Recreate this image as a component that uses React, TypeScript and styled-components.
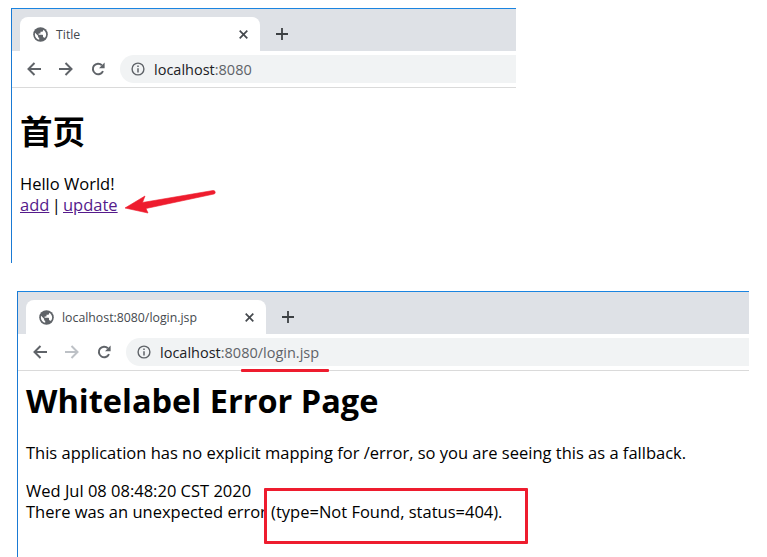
import React from "react";
import styled, { createGlobalStyle } from "styled-components";

const GlobalStyle = createGlobalStyle`
  html, body {
    margin: 0;
    padding: 0;
    background: #fff;
    overflow: hidden;
  }
  body {
    font-family: "Open Sans", "Noto Sans CJK SC", sans-serif;
    color: #000;
  }
`;

const Page = styled.div`
  width: 767px;
  height: 557px;
  position: relative;
  overflow: hidden;
  display: flex;
  flex-direction: column;
`;

const Shot = styled.section<{ $left: number; $top: number; $width: number; $height: number }>`
  position: relative;
  box-sizing: border-box;
  margin-left: ${(p) => p.$left}px;
  margin-top: ${(p) => p.$top}px;
  width: ${(p) => p.$width}px;
  height: ${(p) => p.$height}px;
  border-left: 1px solid #1a7ad4;
  border-top: 1px solid #1a84e0;
  flex: none;
`;

const TabStrip = styled.div`
  height: 42px;
  background: #dee1e6;
  display: flex;
  align-items: flex-end;
  padding-left: 8px;
`;

const Tab = styled.div`
  width: 240px;
  height: 34px;
  box-sizing: border-box;
  background: #fff;
  border-radius: 8px 8px 0 0;
  display: flex;
  align-items: center;
  padding: 0 12px 0 13px;
  font-size: 12.3px;
  color: #45494e;
  flex: none;
`;

const TabTitle = styled.span`
  margin-left: 8px;
  flex: 1;
  white-space: nowrap;
`;

const NewTab = styled.div`
  width: 44px;
  height: 34px;
  display: flex;
  align-items: center;
  justify-content: center;
  color: #3c4043;
  flex: none;
`;

const Toolbar = styled.div`
  box-sizing: border-box;
  border-bottom: 1px solid #dadada;
  height: 37px;
  background: #fff;
  display: flex;
  align-items: flex-start;
  padding: 4px 0 0 15px;
`;

const NavButtons = styled.div`
  display: flex;
  align-items: center;
  gap: 18px;
  height: 28px;
  flex: none;
`;

const Omnibox = styled.div`
  margin-left: 15px;
  flex: 1;
  height: 28px;
  background: #f1f3f4;
  border-radius: 14px 0 0 14px;
  display: flex;
  align-items: center;
  padding-left: 11px;
  font-size: 14.5px;
  color: #202124;
`;

const Host = styled.span`
  margin-left: 9px;
  white-space: nowrap;
`;

const Dim = styled.span`
  color: #5f6368;
`;

const Content = styled.div<{ $paddingLeft: number }>`
  padding-left: ${(p) => p.$paddingLeft}px;
`;

const Heading = styled.h1<{ $top: number }>`
  margin: ${(p) => p.$top}px 0 0;
  font-size: 32.5px;
  font-weight: 700;
  line-height: 44px;
  white-space: nowrap;
`;

const BodyLine = styled.div<{ $top?: number }>`
  margin-top: ${(p) => p.$top ?? 0}px;
  font-size: 16.5px;
  line-height: 21px;
  white-space: nowrap;
`;

const LinkLine = styled(BodyLine)`
  word-spacing: -2px;
`;

const Link = styled.a`
  color: #551a8b;
  text-decoration: underline;
`;

const ArrowMark = styled.svg`
  position: absolute;
  left: 113px;
  top: 181px;
`;

const UrlUnderline = styled.div`
  position: absolute;
  left: 223px;
  top: 77px;
  width: 88px;
  height: 3px;
  border-radius: 1px;
  background: #ee1c2e;
`;

const ErrorBox = styled.div`
  position: absolute;
  left: 246px;
  top: 196px;
  box-sizing: border-box;
  width: 264px;
  height: 56px;
  border: 3px solid #ee1c2e;
  border-radius: 1px;
`;

function Globe() {
  return (
    <svg width="15" height="15" viewBox="0 0 16 16">
      <circle cx="8" cy="8" r="7.8" fill="#5f6368" />
      <path
        d="M2.2 6.2 5.4 9.2v1c0 .8.6 1.3 1.2 1.3v2.2C4.2 13.3 2 11 2 8c0-.6.1-1.2.2-1.8ZM10.8 2.9c1.9.9 3.2 2.8 3.2 5.1 0 1.4-.6 2.8-1.5 3.8-.2-.5-.7-.9-1.2-.9h-.6V9c0-.4-.3-.7-.7-.7H6V7h1.3c.4 0 .7-.3.7-.7V5h1.3c.8 0 1.5-.6 1.5-1.4v-.7Z"
        fill="#fff"
      />
    </svg>
  );
}

function CloseIcon() {
  return (
    <svg width="9" height="9" viewBox="0 0 9 9">
      <path d="M.7.7 8.3 8.3M8.3.7.7 8.3" stroke="#45494e" strokeWidth="1.7" fill="none" />
    </svg>
  );
}

function PlusIcon() {
  return (
    <svg width="14" height="14" viewBox="0 0 14 14">
      <path d="M7 1v12M1 7h12" stroke="#3c4043" strokeWidth="1.8" fill="none" />
    </svg>
  );
}

function BackIcon() {
  return (
    <svg width="14" height="14" viewBox="0 0 14 14">
      <path d="M14 7H1.5M7.5 1 1.5 7l6 6" stroke="#5f6368" strokeWidth="2" fill="none" />
    </svg>
  );
}

function ForwardIcon({ off }: { off?: boolean }) {
  return (
    <svg width="14" height="14" viewBox="0 0 14 14">
      <path d="M0 7h12.5M6.5 1l6 6-6 6" stroke={off ? "#bdc1c6" : "#5f6368"} strokeWidth="2" fill="none" />
    </svg>
  );
}

function ReloadIcon() {
  return (
    <svg width="14" height="14" viewBox="0 0 14 14">
      <path d="M12 9.2A5.3 5.3 0 1 1 10.9 3.2" stroke="#5f6368" strokeWidth="2" fill="none" />
      <path d="M13.6 .6v5.6H8Z" fill="#5f6368" />
    </svg>
  );
}

function InfoIcon() {
  return (
    <svg width="14" height="14" viewBox="0 0 14 14">
      <circle cx="7" cy="7" r="5.9" stroke="#5f6368" strokeWidth="1.4" fill="none" />
      <path d="M7 6.2v4.2M7 3.6v1.5" stroke="#5f6368" strokeWidth="1.5" fill="none" />
    </svg>
  );
}

interface ChromeProps {
  title: string;
  forwardOff?: boolean;
  children: React.ReactNode;
}

function BrowserChrome({ title, forwardOff, children }: ChromeProps) {
  return (
    <>
      <TabStrip>
        <Tab>
          <Globe />
          <TabTitle>{title}</TabTitle>
          <CloseIcon />
        </Tab>
        <NewTab>
          <PlusIcon />
        </NewTab>
      </TabStrip>
      <Toolbar>
        <NavButtons>
          <BackIcon />
          <ForwardIcon off={forwardOff} />
          <ReloadIcon />
        </NavButtons>
        <Omnibox>
          <InfoIcon />
          {children}
        </Omnibox>
      </Toolbar>
    </>
  );
}

export default function App() {
  return (
    <Page>
      <GlobalStyle />
      <Shot $left={11} $top={8} $width={505} $height={255}>
        <BrowserChrome title="Title">
          <Host>
            localhost<Dim>:8080</Dim>
          </Host>
        </BrowserChrome>
        <Content $paddingLeft={8}>
          <Heading $top={22}>首页</Heading>
          <BodyLine $top={19}>Hello World!</BodyLine>
          <LinkLine>
            <Link href="#add">add</Link> | <Link href="#update">update</Link>
          </LinkLine>
        </Content>
        <ArrowMark width="92" height="34" viewBox="0 0 92 34">
          <path
            d="M0 18 20 6 17.5 12.5 88 .5C90.5 .2 91 3.5 89 4L21 18.5 23 23Z"
            fill="#ee1c2e"
            stroke="#ee1c2e"
            strokeWidth="0.6"
            strokeLinejoin="round"
          />
        </ArrowMark>
      </Shot>
      <Shot $left={17} $top={28} $width={732} $height={266}>
        <BrowserChrome title="localhost:8080/login.jsp" forwardOff>
          <Host>
            localhost<Dim>:8080/login.jsp</Dim>
          </Host>
        </BrowserChrome>
        <UrlUnderline />
        <Content $paddingLeft={8}>
          <Heading $top={8}>Whitelabel Error Page</Heading>
          <BodyLine $top={19}>
            This application has no explicit mapping for /error, so you are seeing this as a fallback.
          </BodyLine>
          <BodyLine $top={17}>Wed Jul 08 08:48:20 CST 2020</BodyLine>
          <BodyLine>There was an unexpected error (type=Not Found, status=404).</BodyLine>
        </Content>
        <ErrorBox />
      </Shot>
    </Page>
  );
}
